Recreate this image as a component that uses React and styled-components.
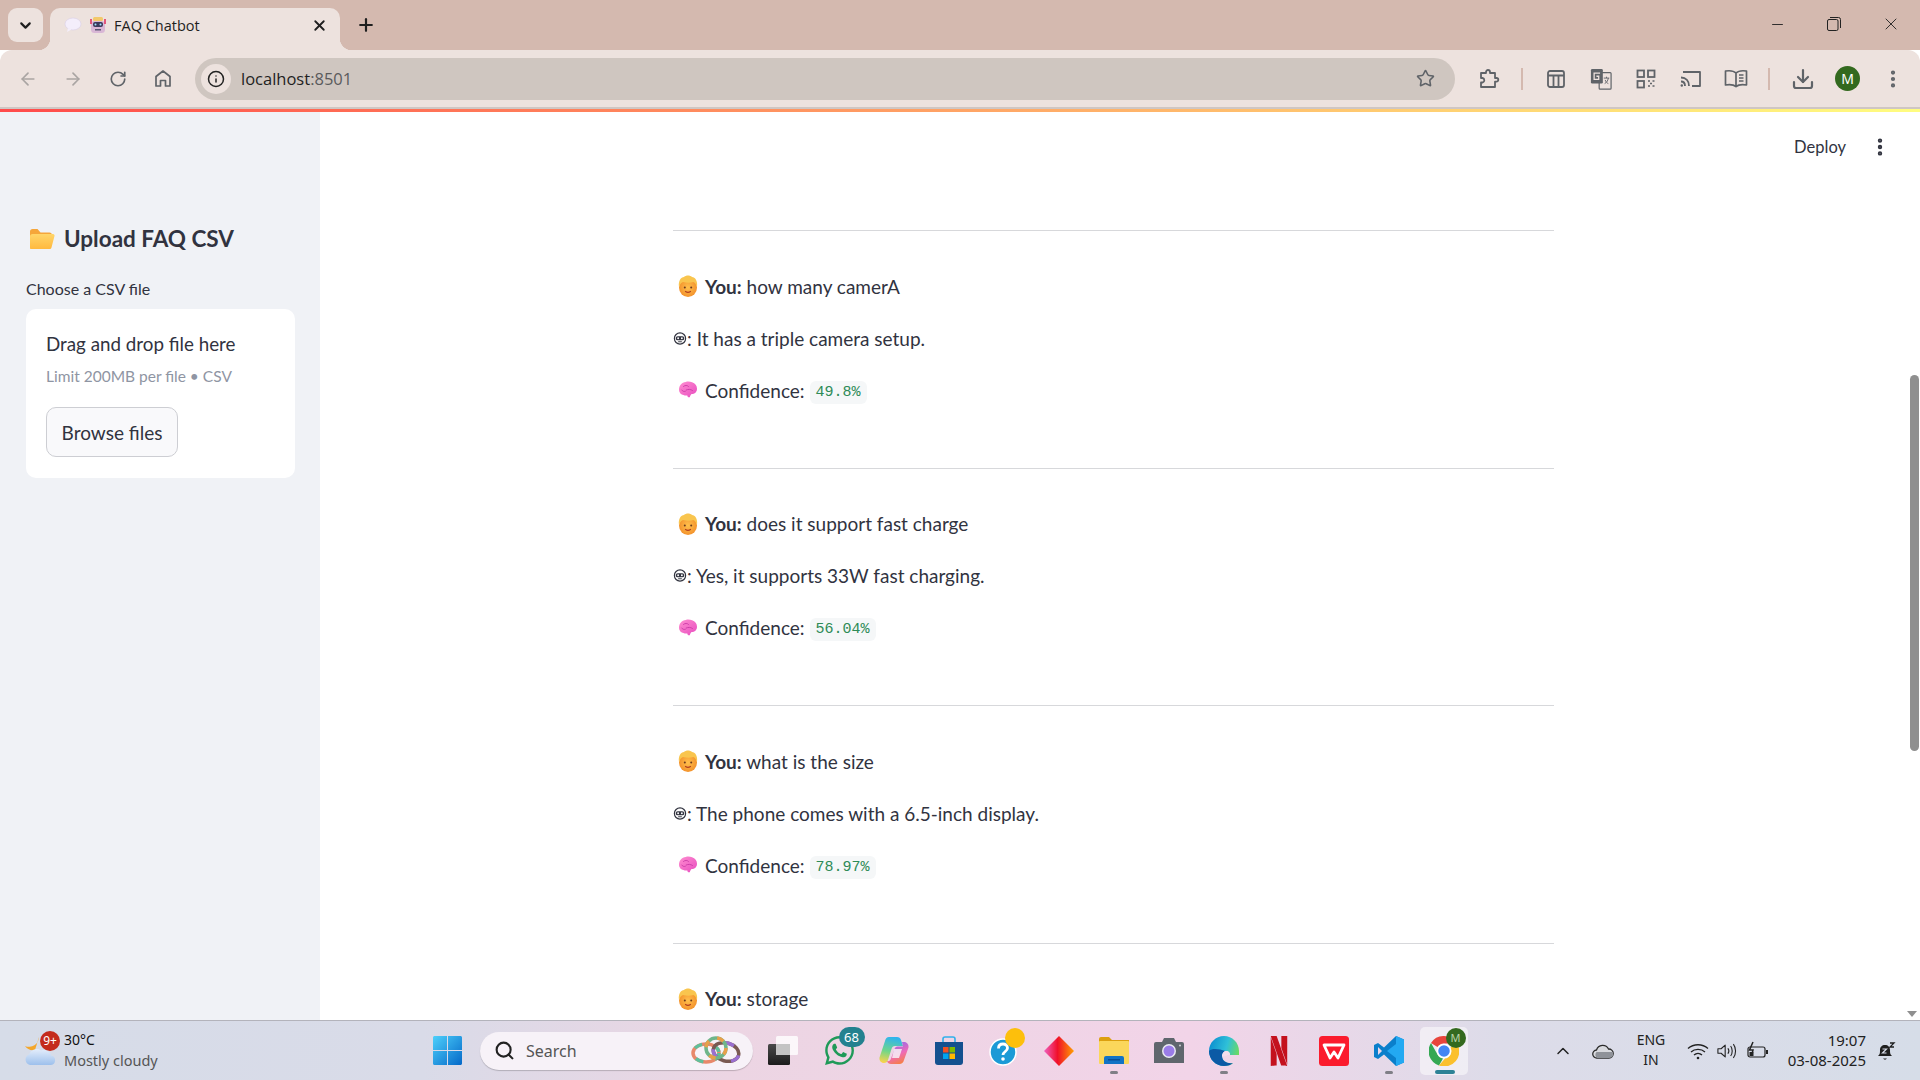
import React from "react";
import styled, { createGlobalStyle } from "styled-components";
import {
  ArrowLeft,
  ArrowRight,
  RotateCw,
  Info,
  Star,
  X,
  Plus,
  ChevronDown,
  ChevronUp,
  Minus,
  Download,
  EllipsisVertical,
  Search,
} from "lucide-react";
import { FaWhatsapp } from "react-icons/fa";
import { SiNetflix } from "react-icons/si";

const UI_FONT = `"Noto Sans", "Open Sans", sans-serif`;
const ST_FONT = `Lato, "Noto Sans", sans-serif`;

const messages = [
  { q: "how many camerA", a: "It has a triple camera setup.", c: "49.8%" },
  { q: "does it support fast charge", a: "Yes, it supports 33W fast charging.", c: "56.04%" },
  { q: "what is the size", a: "The phone comes with a 6.5-inch display.", c: "78.97%" },
];

const FaceEmoji = () => (
  <svg width="20" height="22" viewBox="0 0 20 22">
    <defs>
      <radialGradient id="faceG" cx="50%" cy="50%" r="60%">
        <stop offset="0%" stopColor="#ffc04d" />
        <stop offset="100%" stopColor="#f18a26" />
      </radialGradient>
    </defs>
    <ellipse cx="10" cy="12.500" rx="9" ry="9.500" fill="url(#faceG)" />
    <path d="M1 12C0 6 3 2 6 2c2-2 6-2 8 0 3 0 6 4 5 10-1-2.500-2-4.500-3.500-5-3 1-7 1-10.500 0C3 7.500 2 9.500 1 12z" fill="#f9c54e" />
    <circle cx="6.800" cy="12.500" r="1" fill="#6b3a1e" />
    <circle cx="13.200" cy="12.500" r="1" fill="#6b3a1e" />
    <path d="M7.500 16.500c1.700 1.100 3.300 1.100 5 0" stroke="#b2401f" strokeWidth="1.200" fill="none" strokeLinecap="round" />
  </svg>
);

const BrainEmoji = () => (
  <svg width="20" height="18" viewBox="0 0 22 20">
    <defs>
      <linearGradient id="brainG" x1="0" y1="0" x2="1" y2="1">
        <stop offset="0%" stopColor="#ff8ed0" />
        <stop offset="100%" stopColor="#e84cc0" />
      </linearGradient>
    </defs>
    <path d="M1 9.500C1 5 4 1.500 8.500 1c2-.8 5-.6 7 .5 3.500 1 5.500 4 5.500 7 0 3.500-2.500 6-6 6-.8 1-1.500 1.500-2 3.500-1.500.5-2.500-.2-2.800-2-1 .3-3.200.2-4.200-.5C3.500 15.500 1 13 1 9.500z" fill="url(#brainG)" />
    <path d="M6 6c2-1.500 4-1.500 5.500 0M9 10c2-1 5-1 7 .5M4 10c1 1.500 2.500 2 4 1.500" stroke="#c93aa6" strokeWidth="1" fill="none" strokeLinecap="round" />
  </svg>
);

const RobotGlyph = () => (
  <svg width="15" height="15" viewBox="0 0 15 15">
    <circle cx="7.500" cy="7.500" r="6" fill="none" stroke="#31333f" strokeWidth="1.300" />
    <rect x="3" y="5" width="9" height="4.500" rx="2" fill="#31333f" />
    <circle cx="5.500" cy="7.200" r="1" fill="#fff" />
    <circle cx="9.500" cy="7.200" r="1" fill="#fff" />
    <path d="M5.500 11h4" stroke="#31333f" strokeWidth="1" />
  </svg>
);

const FolderEmoji = () => (
  <svg width="26" height="22" viewBox="0 0 26 22">
    <defs>
      <linearGradient id="folderG" x1="0" y1="0" x2="0" y2="1">
        <stop offset="0%" stopColor="#ffd569" />
        <stop offset="100%" stopColor="#ffb93f" />
      </linearGradient>
    </defs>
    <path d="M1 3.500C1 2 2 1 3.500 1h5l3 3.500h9c1.500 0 2.500 1 2.500 2.500v3H1z" fill="#f5a63a" />
    <path d="M1 20V8.500C1 7 2 6 3.500 6H24c1.200 0 1.800 1 1.500 2l-3 11.500c-.3 1-1 1.500-2 1.500H2c-.6 0-1-.4-1-1z" fill="url(#folderG)" />
  </svg>
);

const BubbleFavicon = () => (
  <svg width="18" height="16" viewBox="0 0 18 16">
    <ellipse cx="9" cy="7" rx="8" ry="6" fill="#f4eefb" stroke="#d9cfe8" strokeWidth="0.600" />
    <path d="M4 11l-1 4 4.500-2.500z" fill="#f4eefb" />
  </svg>
);

const RobotFavicon = () => (
  <svg width="16" height="18" viewBox="0 0 16 18">
    <rect x="1" y="5" width="14" height="12" rx="3.500" fill="#d9b7d6" />
    <rect x="3" y="1" width="10" height="4" rx="1.500" fill="#f3c96b" />
    <rect x="0" y="3" width="2" height="5" fill="#e2567a" />
    <rect x="14" y="3" width="2" height="5" fill="#e2567a" />
    <rect x="3" y="6" width="10" height="5" rx="2" fill="#3d3a5c" />
    <circle cx="5.500" cy="8.500" r="1" fill="#9fe3ff" />
    <circle cx="10.500" cy="8.500" r="1" fill="#9fe3ff" />
    <rect x="5" y="13" width="6" height="1.500" fill="#5b5672" />
  </svg>
);

const HomeIcon = () => (
  <svg width="18" height="19" viewBox="0 0 18 19" fill="none" stroke="#5f6368" strokeWidth="1.700">
    <path d="M2 17V7.500L9 2l7 5.500V17h-4.500v-5.500h-5V17z" strokeLinejoin="round" />
  </svg>
);

const PuzzleIcon = () => (
  <svg width="22" height="22" viewBox="0 0 22 22" fill="none" stroke="#5f6368" strokeWidth="1.800" strokeLinejoin="round">
    <path d="M3 5h5V4a2 2 0 0 1 4 0v1h5v5h1.500a1.800 1.800 0 0 1 0 3.600H17V19H3v-4.500h1.500a2.300 2.300 0 0 0 0-4.500H3z" />
  </svg>
);

const PanelIcon = () => (
  <svg width="20" height="20" viewBox="0 0 20 20" fill="none" stroke="#5f6368" strokeWidth="1.800">
    <rect x="2" y="2" width="16" height="16" rx="2" />
    <path d="M2 6.500h16M7.500 6.500V18M12.500 6.500V18" />
  </svg>
);

const TranslateIcon = () => (
  <svg width="22" height="22" viewBox="0 0 24 24">
    <rect x="10" y="5" width="13" height="18" rx="1" fill="#ede2de" stroke="#5f6368" strokeWidth="1.300" />
    <rect x="1" y="1" width="13" height="16" rx="1.500" fill="#5f6368" />
    <path d="M11 5.500H4.500v7H9.500v-3.500H7" fill="none" stroke="#ede2de" strokeWidth="1.400" />
    <path d="M15 11h6M18 9.500v1.500M20 11c-.5 3-2 5-4 6M16.500 13c.8 2 2 3.500 3.500 4" fill="none" stroke="#5f6368" strokeWidth="1" />
  </svg>
);

const QrIcon = () => (
  <svg width="20" height="20" viewBox="0 0 20 20" fill="none" stroke="#5f6368" strokeWidth="1.800">
    <rect x="1.500" y="1.500" width="6.500" height="6.500" />
    <rect x="12" y="1.500" width="6.500" height="6.500" />
    <rect x="1.500" y="12" width="6.500" height="6.500" />
    <path d="M12 12h2M16.500 12h2M14 14.500h2.500M12 17h2M16.500 17h2" strokeWidth="1.500" strokeDasharray="2 1" />
  </svg>
);

const CastIcon = () => (
  <svg width="22" height="18" viewBox="0 0 22 18" fill="none" stroke="#5f6368" strokeWidth="1.800">
    <path d="M3 2h17v14h-8" strokeLinejoin="round" />
    <path d="M1 7.500c5 0 8 3.500 8 8.500M1 11.500c2.500 0 4 2 4 4.500" />
    <circle cx="1.800" cy="15.500" r="1.200" fill="#5f6368" stroke="none" />
  </svg>
);

const ReaderIcon = () => (
  <svg width="24" height="19" viewBox="0 0 24 19" fill="none" stroke="#5f6368" strokeWidth="1.700">
    <path d="M12 4C9.500 1.500 5 1.500 1.500 2v14c3.500-.5 8-.5 10.500 1.500 2.500-2 7-2 10.500-1.500V2C19 1.500 14.500 1.500 12 4zM12 4v13.500" strokeLinejoin="round" />
    <path d="M15 6h4.500M15 9h4.500M15 12h4.500" />
  </svg>
);

const WinLogo = () => (
  <svg width="29" height="29" viewBox="0 0 29 29">
    <defs>
      <linearGradient id="winG" x1="0" y1="0" x2="1" y2="1">
        <stop offset="0%" stopColor="#4dd0fb" />
        <stop offset="100%" stopColor="#0468c8" />
      </linearGradient>
    </defs>
    <path d="M0 1.500C0 .7.700 0 1.500 0H14v14H0zM15 0h12.500c.8 0 1.500.7 1.500 1.500V14H15zM0 15h14v14H1.500C.7 29 0 28.300 0 27.500zM15 15h14v12.500c0 .8-.7 1.500-1.500 1.500H15z" fill="url(#winG)" />
  </svg>
);

const Rings = () => (
  <svg width="50" height="30" viewBox="0 0 50 30" fill="none" strokeWidth="3.500">
    <ellipse cx="15" cy="17" rx="13" ry="9" stroke="#e8886a" />
    <ellipse cx="15" cy="17" rx="13" ry="9" stroke="#5fbf9b" strokeDasharray="8 12" />
    <ellipse cx="35" cy="16" rx="13" ry="9" stroke="#7a5a52" transform="rotate(15 35 16)" />
    <ellipse cx="35" cy="16" rx="13" ry="9" stroke="#9a6fd0" strokeDasharray="10 14" transform="rotate(15 35 16)" />
    <ellipse cx="25" cy="12" rx="10" ry="10" stroke="#6fb58a" />
    <ellipse cx="25" cy="12" rx="10" ry="10" stroke="#e8a04a" strokeDasharray="7 9" />
  </svg>
);

const TaskView = () => (
  <svg width="30" height="29" viewBox="0 0 30 29">
    <defs>
      <linearGradient id="tvG" x1="0" y1="0" x2="0" y2="1">
        <stop offset="0%" stopColor="#4a4a4a" />
        <stop offset="100%" stopColor="#1c1c1c" />
      </linearGradient>
    </defs>
    <rect x="0" y="8" width="22" height="21" rx="1.500" fill="url(#tvG)" />
    <rect x="8" y="0" width="22" height="19" rx="1.500" fill="#fff" fillOpacity="0.8" />
    <rect x="8" y="8" width="14" height="11" fill="#c4c4c4" />
  </svg>
);

const Copilot = () => (
  <svg width="30" height="29" viewBox="0 0 30 29">
    <defs>
      <linearGradient id="copG" x1="0.300" y1="0" x2="0.700" y2="1">
        <stop offset="0%" stopColor="#8a6cf0" />
        <stop offset="55%" stopColor="#ee6ab8" />
        <stop offset="100%" stopColor="#f7813a" />
      </linearGradient>
      <linearGradient id="copH" x1="0.500" y1="0" x2="0.300" y2="1">
        <stop offset="0%" stopColor="#2fb4ee" />
        <stop offset="55%" stopColor="#6fd68a" />
        <stop offset="100%" stopColor="#f7d44c" />
      </linearGradient>
    </defs>
    <path d="M10 1h8c2 0 3.500 1 4 3l2 6H16c-2 0-3 1-3.500 3L9 24c-.6 2-2 3-4 3-3 0-5-2.500-4.500-5.500L6 5c.6-2.500 2-4 4-4z" fill="url(#copH)" />
    <path d="M23 6h2c3 0 5 2.500 4.500 5.500L25 24c-.6 2.500-2.300 4-4.500 4H12c-2 0-3.500-1-4-3 2 .5 3.500-.5 4-2.500l3.500-9.500c.5-1.500 1.500-2.500 3-2.500H24z" fill="url(#copG)" />
    <path d="M15 13h8l-3 9h-7z" fill="#f7f0f6" fillOpacity="0.85" />
  </svg>
);

const Store = () => (
  <svg width="30" height="30" viewBox="0 0 30 30">
    <path d="M9 6V3a2 2 0 0 1 2-2h8a2 2 0 0 1 2 2v3" fill="none" stroke="#31b0ea" strokeWidth="1.600" />
    <path d="M1 6h28v20a3 3 0 0 1-3 3H4a3 3 0 0 1-3-3z" fill="#14508f" />
    <rect x="9" y="11" width="5.500" height="5.500" fill="#f25022" />
    <rect x="15.500" y="11" width="5.500" height="5.500" fill="#7fba00" />
    <rect x="9" y="17.500" width="5.500" height="5.500" fill="#00a4ef" />
    <rect x="15.500" y="17.500" width="5.500" height="5.500" fill="#ffb900" />
  </svg>
);

const Diamond = () => (
  <svg width="30" height="30" viewBox="0 0 30 30">
    <defs>
      <linearGradient id="diaG" x1="0" y1="0" x2="1" y2="0">
        <stop offset="0%" stopColor="#f060c0" />
        <stop offset="45%" stopColor="#f0102a" />
        <stop offset="100%" stopColor="#ffa000" />
      </linearGradient>
    </defs>
    <path d="M15 0l15 15-15 15L0 15z" fill="url(#diaG)" />
  </svg>
);

const ExplorerIcon = () => (
  <svg width="30" height="27" viewBox="0 0 30 27">
    <path d="M0 2a2 2 0 0 1 2-2h8l3 3h17v6H0z" fill="#dca00f" />
    <rect x="0" y="4" width="30" height="23" rx="1" fill="#fbd75b" />
    <path d="M5 27v-6a2 2 0 0 1 2-2h16a2 2 0 0 1 2 2v6z" fill="#1373c5" />
    <rect x="9" y="22" width="12" height="1.500" fill="#0a4f96" />
  </svg>
);

const CameraIcon = () => (
  <svg width="30" height="25" viewBox="0 0 30 25">
    <path d="M0 6a2 2 0 0 1 2-2h6l2-4h10l2 4h6a2 2 0 0 1 2 2v19H0z" fill="#5f666d" />
    <circle cx="15" cy="13" r="7" fill="#eaeaf2" />
    <circle cx="15" cy="13" r="5.500" fill="#9a7ce8" />
    <circle cx="26" cy="7.500" r="1" fill="#cfd2d6" />
  </svg>
);

const EdgeIcon = () => (
  <svg width="30" height="30" viewBox="0 0 30 30">
    <defs>
      <linearGradient id="edgeA" x1="0" y1="0.300" x2="1" y2="0.600">
        <stop offset="0%" stopColor="#0c8fd0" />
        <stop offset="55%" stopColor="#2fc0d8" />
        <stop offset="100%" stopColor="#6fdc5c" />
      </linearGradient>
    </defs>
    <path d="M15 0C6.700 0 0 6.700 0 15c0 8.300 6.700 15 15 15 4 0 7-1 9-3-6 1-11-2-11-7 0-3 2-5 4-5 3 0 4 2 4 4h9V15C30 6.700 23.300 0 15 0z" fill="url(#edgeA)" />
    <path d="M0 15c0 8.300 6.700 15 15 15 4 0 7-1 9-3-6 1-11-2-11-7 0-2.500 1.500-4.500 3.500-5C10 13 3 12 0 15z" fill="#0b5aa5" />
    <path d="M13 20c0-3 2-5 4-5 3 0 4 2 4 4h-2.500c-.5 1.500-5.500 1.500-5.500 1z" fill="#f3ddec" />
  </svg>
);

const WpsIcon = () => (
  <svg width="30" height="30" viewBox="0 0 30 30">
    <rect width="30" height="30" rx="3.500" fill="#fb1b2d" />
    <path d="M5 9h20l-6 13-4-6-4 6z" fill="none" stroke="#fff" strokeWidth="2.800" strokeLinejoin="round" />
  </svg>
);

const VscodeIcon = () => (
  <svg width="30" height="30" viewBox="0 0 30 30">
    <path d="M22 0l8 3.500v23L22 30 10 18.500 4 23 0 21v-12l4-2 6 4.500z" fill="#0a7fcb" />
    <path d="M22 0l8 3.500v23L22 30V8l-9 7 9 7z" fill="#23a9f2" />
    <path d="M4 11v8l4-4z" fill="#ead9ea" />
  </svg>
);

const ChromeIcon = () => (
  <svg width="30" height="30" viewBox="0 0 30 30">
    <path d="M15 0a15 15 0 0 1 13 7.500H15A7.500 7.500 0 0 0 8.500 11L2 7A15 15 0 0 1 15 0z" fill="#e8453c" />
    <path d="M2 7l6.500 11.500a7.500 7.500 0 0 0 5.500 4L10 29.500A15 15 0 0 1 2 7z" fill="#34a853" />
    <path d="M28 7.500A15 15 0 0 1 10 29.500l6-7a7.500 7.500 0 0 0 5.500-11z" fill="#fbc02d" />
    <circle cx="15" cy="15" r="6.500" fill="#4285f4" stroke="#fff" strokeWidth="1.500" />
  </svg>
);

const HelpIcon = () => (
  <svg width="30" height="30" viewBox="0 0 30 30">
    <circle cx="14" cy="16" r="13" fill="#1b9ad6" stroke="#fff" strokeWidth="1.500" />
    <path d="M9.500 12.500c0-3 2-4.500 4.500-4.500s4.500 1.500 4.500 4c0 3.500-4.500 3.500-4.500 7" fill="none" stroke="#fff" strokeWidth="2.800" />
    <circle cx="14" cy="23" r="1.800" fill="#fff" />
  </svg>
);

const WeatherIcon = () => (
  <svg width="32" height="32" viewBox="0 0 32 32">
    <defs>
      <linearGradient id="cloudG" x1="0" y1="0" x2="0" y2="1">
        <stop offset="0%" stopColor="#e3edfb" />
        <stop offset="100%" stopColor="#9dc0ec" />
      </linearGradient>
    </defs>
    <path d="M15 0a10 10 0 0 1-14 9c2 3 6 5 10 4z" fill="#f4a62a" />
    <path d="M6 28a5.500 5.500 0 0 1-1-10.500 8 8 0 0 1 12-4 7 7 0 0 1 10 5 4.800 4.800 0 0 1 0 9.500z" fill="url(#cloudG)" />
  </svg>
);

const CloudTray = () => (
  <svg width="22" height="16" viewBox="0 0 22 16">
    <path d="M5 15a4 4 0 0 1-.5-8 6.500 6.500 0 0 1 12-1 4.500 4.500 0 0 1 .5 9z" fill="#d8d9de" stroke="#2b2b2b" strokeWidth="1.300" />
    <path d="M5 15a4 4 0 0 1-.5-6h16c1.500 2 .5 6-3.500 6z" fill="#8f9299" />
  </svg>
);

const WifiIcon = () => (
  <svg width="22" height="18" viewBox="0 0 22 18" fill="none" stroke="#222" strokeWidth="1.300">
    <path d="M1 6.500c5.500-5 14.500-5 20 0M4 10c3.800-3.500 10.200-3.500 14 0M7 13c2.300-2 5.700-2 8 0" />
    <circle cx="11" cy="16" r="1.300" fill="#222" stroke="none" />
  </svg>
);

const VolumeIcon = () => (
  <svg width="22" height="18" viewBox="0 0 22 18" fill="none" stroke="#222" strokeWidth="1.200">
    <path d="M1 6.500h3.500L9 2.500v13l-4.500-4H1z" strokeLinejoin="round" />
    <path d="M12 6c1.300 1.800 1.300 4.200 0 6M15 3.500c2.300 3 2.300 8 0 11M18 1.500c3.200 4.200 3.200 10.800 0 15" />
  </svg>
);

const BatteryIcon = () => (
  <svg width="22" height="20" viewBox="0 0 22 20" fill="none" stroke="#222" strokeWidth="1.200">
    <rect x="1" y="6" width="17" height="10" rx="2" />
    <rect x="19" y="9" width="2" height="4" fill="#222" stroke="none" />
    <path d="M6 1L2.500 9H6l-1.500 6" strokeWidth="1.500" />
    <rect x="2.500" y="11" width="4" height="4" fill="#222" stroke="none" />
  </svg>
);

const BellIcon = () => (
  <svg width="20" height="20" viewBox="0 0 20 20">
    <path d="M2 15c2-1.500 2-3 2-6 0-3 2-5 5-5s5 2 5 5c0 3 0 4.500 2 6z" fill="#1f1f1f" />
    <path d="M7 17.500c1 1.500 3 1.500 4 0z" fill="#1f1f1f" />
    <path d="M6.500 8h4l-4 4h4" stroke="#d7dce8" strokeWidth="1.200" fill="none" />
    <path d="M14 2h4l-4 4h4" stroke="#1f1f1f" strokeWidth="1.300" fill="none" />
  </svg>
);

const RestoreGlyph = () => (
  <svg width="14" height="14" viewBox="0 0 14 14" fill="none" stroke="#222" strokeWidth="1">
    <rect x="0.500" y="2.500" width="10.500" height="11" rx="1.500" />
    <path d="M3 .5h8.500a2 2 0 0 1 2 2V11" />
  </svg>
);

const App = () => {
  return (
    <Shell>
      <GlobalStyle />
      <TabStrip>
        <TabMenu>
          <ChevronDown size={17} strokeWidth={3} color="#1f1f1f" />
        </TabMenu>
        <Tab>
          <BubbleFavicon />
          <RobotFavicon />
          <TabTitle>FAQ Chatbot</TabTitle>
          <X size={17} strokeWidth={2.600} color="#1f1f1f" />
        </Tab>
        <NewTab>
          <Plus size={20} strokeWidth={2.600} color="#1f1f1f" />
        </NewTab>
        <WindowControls>
          <WinButton>
            <Minus size={17} strokeWidth={1.300} color="#222" />
          </WinButton>
          <WinButton>
            <RestoreGlyph />
          </WinButton>
          <WinButton>
            <X size={20} strokeWidth={1.100} color="#222" />
          </WinButton>
        </WindowControls>
      </TabStrip>

      <Toolbar>
        <ToolSlot>
          <ArrowLeft size={20} color="#aaa5a3" strokeWidth={2} />
        </ToolSlot>
        <ToolSlot>
          <ArrowRight size={20} color="#aaa5a3" strokeWidth={2} />
        </ToolSlot>
        <ToolSlot>
          <RotateCw size={18} color="#5f6368" strokeWidth={2.200} />
        </ToolSlot>
        <ToolSlot>
          <HomeIcon />
        </ToolSlot>
        <Omnibox>
          <InfoChip>
            <Info size={18} color="#222" strokeWidth={2} />
          </InfoChip>
          <UrlHost>
            localhost<UrlPort>:8501</UrlPort>
          </UrlHost>
          <Star size={19} color="#5f6368" strokeWidth={2} />
        </Omnibox>
        <ToolSlot $first>
          <PuzzleIcon />
        </ToolSlot>
        <ToolSep />
        <ToolSlot>
          <PanelIcon />
        </ToolSlot>
        <ToolSlot>
          <TranslateIcon />
        </ToolSlot>
        <ToolSlot>
          <QrIcon />
        </ToolSlot>
        <ToolSlot>
          <CastIcon />
        </ToolSlot>
        <ToolSlot>
          <ReaderIcon />
        </ToolSlot>
        <ToolSep />
        <ToolSlot>
          <Download size={24} color="#5f6368" strokeWidth={2.200} />
        </ToolSlot>
        <ToolSlot>
          <Avatar>M</Avatar>
        </ToolSlot>
        <ToolSlot>
          <EllipsisVertical size={22} color="#5f6368" strokeWidth={2.600} />
        </ToolSlot>
      </Toolbar>
      <Decoration />

      <Body>
        <Sidebar>
          <SideTitle>
            <FolderEmoji />
            Upload FAQ CSV
          </SideTitle>
          <FieldLabel>Choose a CSV file</FieldLabel>
          <Dropzone>
            <DropTitle>Drag and drop file here</DropTitle>
            <DropHint>Limit 200MB per file • CSV</DropHint>
            <BrowseButton>Browse files</BrowseButton>
          </Dropzone>
        </Sidebar>

        <Main>
          <AppHeader>
            <DeployLabel>Deploy</DeployLabel>
            <EllipsisVertical size={22} color="#31333f" strokeWidth={2.800} />
          </AppHeader>
          <ChatColumn>
            {messages.map((m) => (
              <ChatBlock key={m.q}>
                <ChatRow>
                  <EmojiCell>
                    <FaceEmoji />
                  </EmojiCell>
                  <span>
                    <Bold>You:</Bold> {m.q}
                  </span>
                </ChatRow>
                <ChatRow>
                  <RobotCell>
                    <RobotGlyph />
                  </RobotCell>
                  <span>: {m.a}</span>
                </ChatRow>
                <ChatRow>
                  <EmojiCell>
                    <BrainEmoji />
                  </EmojiCell>
                  <span>Confidence:</span>
                  <Code>{m.c}</Code>
                </ChatRow>
              </ChatBlock>
            ))}
            <ChatBlock>
              <ChatRow>
                <EmojiCell>
                  <FaceEmoji />
                </EmojiCell>
                <span>
                  <Bold>You:</Bold> storage
                </span>
              </ChatRow>
            </ChatBlock>
          </ChatColumn>
          <ScrollThumb />
          <ScrollArrow />
        </Main>
      </Body>

      <Taskbar>
        <Weather>
          <WeatherArt>
            <WeatherIcon />
            <WeatherBadge>9+</WeatherBadge>
          </WeatherArt>
          <WeatherText>
            <WeatherTemp>30°C</WeatherTemp>
            <WeatherDesc>Mostly cloudy</WeatherDesc>
          </WeatherText>
        </Weather>
        <TaskSlot>
          <WinLogo />
        </TaskSlot>
        <SearchBox>
          <Search size={21} color="#222" strokeWidth={2.400} />
          <SearchText>Search</SearchText>
          <Rings />
        </SearchBox>
        <TaskSlot>
          <TaskView />
        </TaskSlot>
        <AppsGroup>
          <TaskSlot>
            <FaWhatsapp size={33} color="#1f9a58" />
            <CountBadge>68</CountBadge>
          </TaskSlot>
          <TaskSlot>
            <Copilot />
          </TaskSlot>
          <TaskSlot>
            <Store />
          </TaskSlot>
          <TaskSlot>
            <HelpIcon />
            <YellowDot />
          </TaskSlot>
          <TaskSlot>
            <Diamond />
          </TaskSlot>
          <TaskSlot $running>
            <ExplorerIcon />
          </TaskSlot>
          <TaskSlot>
            <CameraIcon />
          </TaskSlot>
          <TaskSlot $running>
            <EdgeIcon />
          </TaskSlot>
          <TaskSlot>
            <SiNetflix size={30} color="#c4111d" />
          </TaskSlot>
          <TaskSlot>
            <WpsIcon />
          </TaskSlot>
          <TaskSlot $running>
            <VscodeIcon />
          </TaskSlot>
          <TaskSlot $active>
            <ChromeIcon />
            <ChromeBadge>M</ChromeBadge>
          </TaskSlot>
        </AppsGroup>
        <Tray>
          <TraySlot $w={40}>
            <ChevronUp size={20} color="#222" strokeWidth={1.800} />
          </TraySlot>
          <TraySlot $w={40}>
            <CloudTray />
          </TraySlot>
          <LangSlot>
            ENG
            <br />
            IN
          </LangSlot>
          <TraySlot $w={38}>
            <WifiIcon />
          </TraySlot>
          <TraySlot $w={20}>
            <VolumeIcon />
          </TraySlot>
          <TraySlot $w={42}>
            <BatteryIcon />
          </TraySlot>
          <Clock>
            19:07
            <br />
            03-08-2025
          </Clock>
          <TraySlot $w={40}>
            <BellIcon />
          </TraySlot>
        </Tray>
      </Taskbar>
    </Shell>
  );
};

const GlobalStyle = createGlobalStyle`
  html, body {
    margin: 0;
    padding: 0;
    background: #fff;
  }
  body {
    font-family: ${UI_FONT};
    overflow: hidden;
  }
`;

const Shell = styled.div`
  width: 1920px;
  height: 1080px;
  display: flex;
  flex-direction: column;
  overflow: hidden;
`;

const TabStrip = styled.div`
  height: 50px;
  flex: none;
  background: #d4b9af;
  display: flex;
  align-items: flex-end;
  padding-left: 8px;
`;

const TabMenu = styled.div`
  width: 35px;
  height: 34px;
  margin-bottom: 8px;
  background: #ede2de;
  border-radius: 9px;
  display: flex;
  align-items: center;
  justify-content: center;
`;

const Tab = styled.div`
  position: relative;
  width: 290px;
  height: 42px;
  margin-left: 7px;
  box-sizing: border-box;
  padding: 0 12px 8px 14px;
  background: #ede2de;
  border-radius: 10px 10px 0 0;
  display: flex;
  align-items: center;
  gap: 8px;

  &::before,
  &::after {
    content: "";
    position: absolute;
    bottom: 0;
    width: 12px;
    height: 12px;
  }
  &::before {
    left: -12px;
    background: radial-gradient(circle at 0 0, transparent 12px, #ede2de 12.500px);
  }
  &::after {
    right: -12px;
    background: radial-gradient(circle at 100% 0, transparent 12px, #ede2de 12.500px);
  }
`;

const TabTitle = styled.span`
  flex: 1;
  font-size: 14.500px;
  color: #1f1f1f;
  font-family: "Open Sans", sans-serif;
`;

const NewTab = styled.div`
  width: 32px;
  height: 42px;
  margin-left: 10px;
  padding-bottom: 8px;
  box-sizing: border-box;
  display: flex;
  align-items: center;
  justify-content: center;
`;

const WindowControls = styled.div`
  margin-left: auto;
  align-self: stretch;
  display: flex;
  align-items: center;
  padding-right: 1px;
  padding-bottom: 2px;
`;

const WinButton = styled.div`
  width: 56.5px;
  height: 32px;
  display: flex;
  align-items: center;
  justify-content: center;
`;

const Toolbar = styled.div`
  height: 59px;
  flex: none;
  box-sizing: border-box;
  background: #ede2de;
  border-radius: 12px 12px 0 0;
  border-bottom: 2px solid #cfc6c3;
  padding: 0 0 0 5px;
  display: flex;
  align-items: center;
`;

const ToolSlot = styled.div`
  width: 45px;
  height: 40px;
  flex: none;
  margin-left: ${(p) => (p.$first ? "11px" : "0")};
  display: flex;
  align-items: center;
  justify-content: center;
`;

const ToolSep = styled.div`
  width: 2px;
  height: 22px;
  flex: none;
  margin: 0 10px;
  background: #d4b9af;
`;

const Omnibox = styled.div`
  width: 1260px;
  height: 42px;
  flex: none;
  margin-left: 10px;
  box-sizing: border-box;
  padding: 0 20px 0 6px;
  background: #cfc6c0;
  border-radius: 21px;
  display: flex;
  align-items: center;
`;

const InfoChip = styled.div`
  width: 30px;
  height: 30px;
  border-radius: 50%;
  background: #ede2de;
  display: flex;
  align-items: center;
  justify-content: center;
`;

const UrlHost = styled.div`
  flex: 1;
  margin-left: 10px;
  font-size: 16.500px;
  color: #1f1f1f;
  font-family: "Open Sans", sans-serif;
`;

const UrlPort = styled.span`
  color: #5a5a5c;
`;

const Avatar = styled.div`
  width: 25px;
  height: 25px;
  border-radius: 50%;
  background: #33691e;
  color: #fff;
  font-size: 14px;
  display: flex;
  align-items: center;
  justify-content: center;
`;

const Decoration = styled.div`
  height: 3px;
  flex: none;
  background: linear-gradient(90deg, #ff4b4b, #fffd80);
`;

const Body = styled.div`
  flex: 1;
  min-height: 0;
  display: flex;
`;

const Sidebar = styled.aside`
  width: 320px;
  flex: none;
  box-sizing: border-box;
  padding: 113px 25px 0 26px;
  background: #f0f2f6;
  color: #31333f;
  font-family: ${ST_FONT};
`;

const SideTitle = styled.h2`
  margin: 0 0 24px 3px;
  font-size: 22.500px;
  font-weight: 700;
  line-height: 28px;
  display: flex;
  align-items: center;
  gap: 9px;
`;

const FieldLabel = styled.div`
  font-size: 16px;
  line-height: 24px;
  margin-bottom: 8px;
`;

const Dropzone = styled.div`
  box-sizing: border-box;
  height: 169px;
  padding: 20px 20px 20px 20px;
  background: #fff;
  border-radius: 10px;
  display: flex;
  flex-direction: column;
  align-items: flex-start;
`;

const DropTitle = styled.div`
  font-size: 18.800px;
  line-height: 30px;
`;

const DropHint = styled.div`
  font-size: 15.500px;
  line-height: 24px;
  margin-top: 5px;
  color: #8f95a3;
`;

const BrowseButton = styled.button`
  width: 132px;
  height: 50px;
  margin-top: 19px;
  background: #f9f9fb;
  border: 1px solid #cdced3;
  border-radius: 10px;
  font: inherit;
  font-size: 19px;
  color: #31333f;
`;

const Main = styled.main`
  flex: 1;
  min-width: 0;
  position: relative;
  overflow: hidden;
  background: #fff;
  color: #31333f;
  font-family: ${ST_FONT};
`;

const AppHeader = styled.div`
  height: 70px;
  box-sizing: border-box;
  padding-right: 29px;
  display: flex;
  align-items: center;
  justify-content: flex-end;
  gap: 23px;
`;

const DeployLabel = styled.span`
  font-size: 16.500px;
`;

const ChatColumn = styled.div`
  width: 881px;
  margin: 48px 0 0 353px;
`;

const ChatBlock = styled.section`
  box-sizing: border-box;
  height: 237.5px;
  padding-top: 29px;
  border-top: 1px solid #d7d8db;
`;

const ChatRow = styled.p`
  margin: 0;
  height: 52px;
  display: flex;
  align-items: center;
  white-space: pre;
  font-size: 19px;
`;

const EmojiCell = styled.span`
  width: 32px;
  box-sizing: border-box;
  padding-right: 2px;
  display: flex;
  justify-content: center;
`;

const RobotCell = styled.span`
  width: 14px;
  display: flex;
`;

const Bold = styled.b`
  font-weight: 700;
`;

const Code = styled.code`
  margin: 4px 0 0 5px;
  padding: 3px 6px;
  background: #f5f7f8;
  border-radius: 6px;
  color: #2e8b57;
  font-family: "Liberation Mono", monospace;
  font-size: 15px;
`;

const ScrollThumb = styled.div`
  position: absolute;
  top: 263px;
  right: 1px;
  width: 9px;
  height: 376px;
  background: #8f8f8f;
  border-radius: 5px;
`;

const ScrollArrow = styled.div`
  position: absolute;
  right: 3px;
  bottom: 3px;
  border: 5px solid transparent;
  border-top: 6px solid #8f8f8f;
  border-bottom: 0;
`;

const Taskbar = styled.footer`
  height: 60px;
  flex: none;
  box-sizing: border-box;
  border-top: 1px solid #b3b3bb;
  background: linear-gradient(90deg, #d6dce8 0%, #d9dbe8 22%, #ecd5e3 38%, #f2d4e8 62%, #dddce9 78%, #d6dde8 100%);
  display: flex;
  align-items: center;
`;

const Weather = styled.div`
  width: 420px;
  flex: none;
  box-sizing: border-box;
  padding-left: 24px;
  display: flex;
  align-items: center;
  gap: 8px;
`;

const WeatherArt = styled.div`
  position: relative;
  width: 32px;
  height: 36px;
  display: flex;
  align-items: flex-end;
`;

const WeatherBadge = styled.span`
  position: absolute;
  top: -2px;
  right: -4px;
  width: 20px;
  height: 20px;
  border-radius: 50%;
  background: #c42b1c;
  color: #fff;
  font-size: 12px;
  line-height: 20px;
  text-align: center;
`;

const WeatherText = styled.div`
  margin-top: -2px;
  display: flex;
  flex-direction: column;
`;

const WeatherTemp = styled.span`
  font-size: 14px;
  line-height: 20px;
  color: #111;
`;

const WeatherDesc = styled.span`
  font-size: 14.500px;
  line-height: 20px;
  color: #555;
`;

const TaskSlot = styled.div`
  position: relative;
  width: 55px;
  height: 48px;
  flex: none;
  display: flex;
  align-items: center;
  justify-content: center;

  ${(p) =>
    p.$active &&
    `
    &::before {
      content: "";
      position: absolute;
      left: 3px;
      right: 4px;
      top: 0;
      bottom: 0;
      background: rgba(255, 255, 255, 0.5);
      border-radius: 5px;
    }
    & > * { position: relative; }
    &::after {
      content: "";
      position: absolute;
      left: 18px;
      bottom: 1px;
      width: 20px;
      height: 4px;
      border-radius: 2px;
      background: #2d8296;
    }
  `}

  ${(p) =>
    p.$running &&
    `
    &::after {
      content: "";
      position: absolute;
      left: 23px;
      bottom: 1px;
      width: 8px;
      height: 3px;
      border-radius: 2px;
      background: #7f7f86;
    }
  `}
`;

const SearchBox = styled.div`
  width: 273px;
  height: 38px;
  flex: none;
  margin-left: 5px;
  margin-right: 2px;
  box-sizing: border-box;
  padding: 0 12px 0 14px;
  border-radius: 19px;
  background: #f7f2f8;
  box-shadow: 0 1px 1px rgba(0, 0, 0, 0.2);
  display: flex;
  align-items: center;
`;

const SearchText = styled.span`
  flex: 1;
  margin-left: 11px;
  font-size: 16px;
  color: #555;
`;

const AppsGroup = styled.div`
  margin-left: 1.500px;
  display: flex;
`;

const CountBadge = styled.span`
  position: absolute;
  top: 0;
  right: 2px;
  width: 26px;
  height: 20px;
  border-radius: 10px;
  background: #23818f;
  color: #fff;
  font-size: 13px;
  line-height: 20px;
  text-align: center;
`;

const YellowDot = styled.span`
  position: absolute;
  top: 1px;
  right: 7px;
  width: 20px;
  height: 20px;
  border-radius: 50%;
  background: #fdbf0c;
`;

const ChromeBadge = styled.span`
  position: absolute !important;
  top: 1px;
  right: 6px;
  width: 20px;
  height: 20px;
  border-radius: 50%;
  background: #33691e;
  color: #b9d3a8;
  font-size: 11px;
  line-height: 20px;
  text-align: center;
`;

const Tray = styled.div`
  margin-left: auto;
  padding-right: 14px;
  display: flex;
  align-items: center;
`;

const TraySlot = styled.div`
  width: ${(p) => p.$w}px;
  flex: none;
  display: flex;
  align-items: center;
  justify-content: center;
`;

const LangSlot = styled.div`
  width: 56px;
  flex: none;
  margin-top: -2px;
  text-align: center;
  font-size: 14px;
  line-height: 20px;
  color: #222;
`;

const Clock = styled.div`
  width: 87px;
  flex: none;
  margin-top: -2px;
  text-align: right;
  font-size: 15px;
  line-height: 20px;
  color: #222;
  white-space: nowrap;
`;

export default App;
